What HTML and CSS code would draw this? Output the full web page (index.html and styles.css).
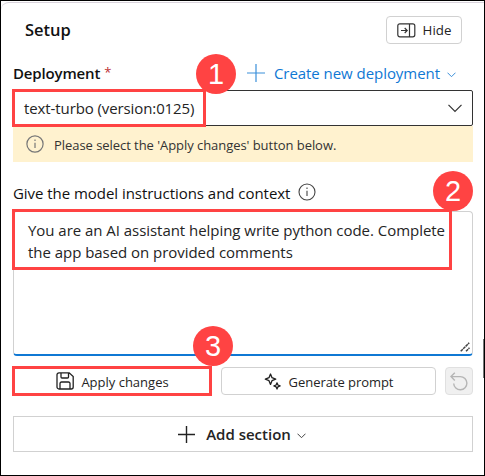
FILE: index.html
```
<!DOCTYPE html>
<html lang="en">
<head>
<meta charset="utf-8">
<title>Setup</title>
<link rel="stylesheet" href="styles.css">
</head>
<body>
<main class="frame">
  <div class="panel">
    <header class="header">
      <h1 class="title">Setup</h1>
      <button class="btn hide-btn">
        <svg width="19" height="15" viewBox="0 0 19 15" fill="none" stroke="#333" stroke-width="1.2"><rect x=".8" y=".8" width="17" height="13" rx="2"/><path d="M12.5 1v13M4 7.5h6M7.7 5l2.500 2.500L7.700 10"/></svg>
        <span class="t-hide">Hide</span>
      </button>
    </header>
    <div class="deploy-row">
      <label class="deploy-label"><span>Deployment</span><span class="star">*</span></label>
      <a class="create">
        <svg width="18" height="18" viewBox="0 0 18 18" fill="none" stroke="#3a8fda" stroke-width="1.200"><path d="M9 0v18M0 9h18"/></svg>
        <span class="t-create">Create new deployment</span>
        <svg class="create-chev" width="9" height="6" viewBox="0 0 9 6" fill="none" stroke="#3a8fda"><path d="M.5.700l4 4 4-4"/></svg>
      </a>
    </div>
    <div class="select">
      <span class="t-select">text-turbo (version:0125)</span>
      <svg width="14" height="9" viewBox="0 0 14 9" fill="none" stroke="#333" stroke-width="1.200"><path d="M.5.800L7 7.500 13.500.800"/></svg>
    </div>
    <div class="notice">
      <svg width="18" height="18" viewBox="0 0 18 18" fill="none" stroke="#777" stroke-width="1.200"><circle cx="9" cy="9" r="8.100"/><path d="M9 7.700v5.200M9 4.600v1.500"/></svg>
      <span class="t-notice">Please select the 'Apply changes' button below.</span>
    </div>
    <div class="context-row">
      <span class="t-context">Give the model instructions and context</span>
      <svg width="18" height="18" viewBox="0 0 18 18" fill="none" stroke="#444" stroke-width="1.100"><circle cx="9" cy="9" r="8"/><path d="M9 7.700v5.200M9 4.600v1.500"/></svg>
    </div>
    <div class="textarea">
      <div class="t-line1">You are an AI assistant helping write python code. Complete</div>
      <div class="t-line2">the app based on provided comments</div>
      <svg class="grip" width="10" height="10" viewBox="0 0 10 10" fill="none" stroke="#444" stroke-width="1.500"><path d="M.7 9.300l8.500-8.500M6 9.300l3.500-3.500" stroke-dasharray="3 .500"/></svg>
    </div>
    <div class="actions">
      <button class="btn apply">
        <svg width="18" height="18" viewBox="0 0 18 18" fill="none" stroke="#222" stroke-width="1.300"><path d="M3 .8h10.200L17.200 4.600V15a2 2 0 0 1-2 2H3a2 2 0 0 1-2-2V3A2 2 0 0 1 3 .8zM5 1v4a1 1 0 0 0 1 1h5.500a1 1 0 0 0 1-1V1M4 17v-5.500a1.500 1.500 0 0 1 1.500-1.500h7a1.500 1.500 0 0 1 1.500 1.500V17"/></svg>
        <span class="t-apply">Apply changes</span>
      </button>
      <button class="btn generate">
        <svg width="17" height="17" viewBox="0 0 17 17" fill="none" stroke="#222" stroke-width="1.300" stroke-linejoin="round"><path d="M6.500 1L8 4.700 11.700 6.200 8 7.700 6.500 11.400 5 7.700 1.300 6.200 5 4.700zM13 9.800l.9 2.200 2.200.9-2.200.9L13 16l-.9-2.200-2.200-.9 2.200-.9z"/></svg>
        <span class="t-generate">Generate prompt</span>
      </button>
      <button class="btn undo" aria-label="Reset">
        <svg width="18" height="19" viewBox="0 0 18 19" fill="none" stroke="#b5b5b5" stroke-width="1.400"><path d="M4.800.8L1 4.600l3.800 3.800M1 4.600h9.300A6.600 6.600 0 1 1 3.700 11.500"/></svg>
      </button>
    </div>
    <button class="add">
      <svg width="17" height="17" viewBox="0 0 17 17" fill="none" stroke="#222" stroke-width="1.400"><path d="M8.500 0v17M0 8.500h17"/></svg>
      <span class="t-add">Add section</span>
      <svg class="add-chev" width="9" height="6" viewBox="0 0 9 6" fill="none" stroke="#444"><path d="M.5.700l4 4 4-4"/></svg>
    </button>
  </div>
  <div class="mark mark-1"></div>
  <div class="mark mark-2"></div>
  <div class="mark mark-3"></div>
  <div class="badge badge-1">1</div>
  <div class="badge badge-2">2</div>
  <div class="badge badge-3">3</div>
  <div class="scroll-hint"></div>
</main>
</body>
</html>
```
FILE: styles.css
```
* { box-sizing: border-box; }
body { margin: 0; font-family: "Open Sans", "Noto Sans", sans-serif; color: #242424; }
svg { display: block; flex: none; }
span { white-space: nowrap; }
.frame { position: relative; width: 485px; height: 476px; border: 1px solid #000; background: #fff; overflow: hidden; }
.panel { height: 473px; margin-top: 1px; border-top: 1px solid #d9d3dc; border-top-left-radius: 8px; padding: 13px 11px 0 12px; }
.header { display: flex; align-items: center; height: 28px; padding: 0 11px 0 12px; justify-content: space-between; }
.title { margin: 0; font-size: 16.5px; font-weight: 600; line-height: 28px; color: #111; }
.btn { display: flex; align-items: center; justify-content: center; height: 28px; padding: 0; background: #fff; border: 1px solid #d1d1d1; border-radius: 4px; font: 13px/20px "Open Sans", sans-serif; color: #242424; }
.hide-btn { width: 76px; gap: 7px; }
.t-hide { font-size: 13.3px; }
.deploy-row { display: flex; align-items: center; justify-content: space-between; height: 28px; margin-top: 15px; padding-right: 17px; }
.deploy-label { display: flex; gap: 4px; font-size: 15px; font-weight: 600; letter-spacing: -0.15px; color: #111; line-height: 22px; }
.star { color: #bc2f32; font-size: 13px; font-weight: 400; line-height: 20px; }
.create { display: flex; align-items: center; color: #0f78d4; font-size: 15px; line-height: 22px; }
.t-create { margin-left: 9px; letter-spacing: -0.05px; }
.create-chev { margin: 3px 0 0 7px; }
.select { display: flex; align-items: center; justify-content: space-between; height: 36px; margin-top: 3px; padding: 0 10px; border: 1px solid #333; border-radius: 2px; font-size: 15px; }
.t-select { letter-spacing: -0.1px; }
.notice { display: flex; align-items: center; gap: 10px; height: 36px; padding: 0 13px; background: #fff2cf; font-size: 13px; color: #333; }
.t-notice { position: relative; top: 1px; letter-spacing: -0.05px; }
.context-row { display: flex; align-items: center; gap: 8px; height: 28px; margin-top: 16px; font-size: 15px; color: #111; }
.t-context { position: relative; top: 1px; letter-spacing: -0.04px; }
.textarea { position: relative; height: 145px; margin-top: 5px; padding: 7px 14px; border: 1px solid #d1d1d1; border-bottom: 2px solid #0f78d4; border-radius: 4px; font-size: 15px; line-height: 22px; white-space: nowrap; }
.t-line1, .t-line2 { letter-spacing: -0.04px; }
.grip { position: absolute; right: 2px; bottom: 2px; }
.actions { display: flex; margin-top: 11px; }
.apply { width: 199px; gap: 7px; }
.t-apply, .t-generate { position: relative; top: 1px; }
.generate { width: 215px; margin-left: 9px; gap: 8px; }
.t-generate { letter-spacing: -0.05px; }
.undo { width: 28px; margin-left: 9px; background: #f0f0f0; border-color: #e0e0e0; }
.add { display: flex; align-items: center; justify-content: center; width: 460px; height: 36px; margin-top: 21px; padding: 0; background: #fff; border: 1px solid #d1d1d1; font: 600 15px/22px "Open Sans", sans-serif; color: #242424; }
.t-add { margin-left: 11px; }
.add-chev { margin: 3px 2px 0 6px; }
.mark { position: absolute; border: 3px solid #ff4343; }
.mark-1 { left: 11px; top: 88px; width: 194px; height: 38px; }
.mark-2 { left: 11px; top: 208px; width: 440px; height: 61px; }
.mark-3 { left: 11px; top: 365px; width: 200px; height: 30px; }
.badge { position: absolute; width: 40px; height: 40px; border-radius: 50%; background: #ff4343; color: #fff; font: 29px/41px "Liberation Sans", sans-serif; text-align: center; }
.badge-1 { left: 195px; top: 53px; }
.badge-2 { left: 432px; top: 170px; }
.badge-3 { left: 192px; top: 325px; }
.scroll-hint { position: absolute; right: 0; top: 338px; width: 1px; height: 39px; background: #777; }
```
